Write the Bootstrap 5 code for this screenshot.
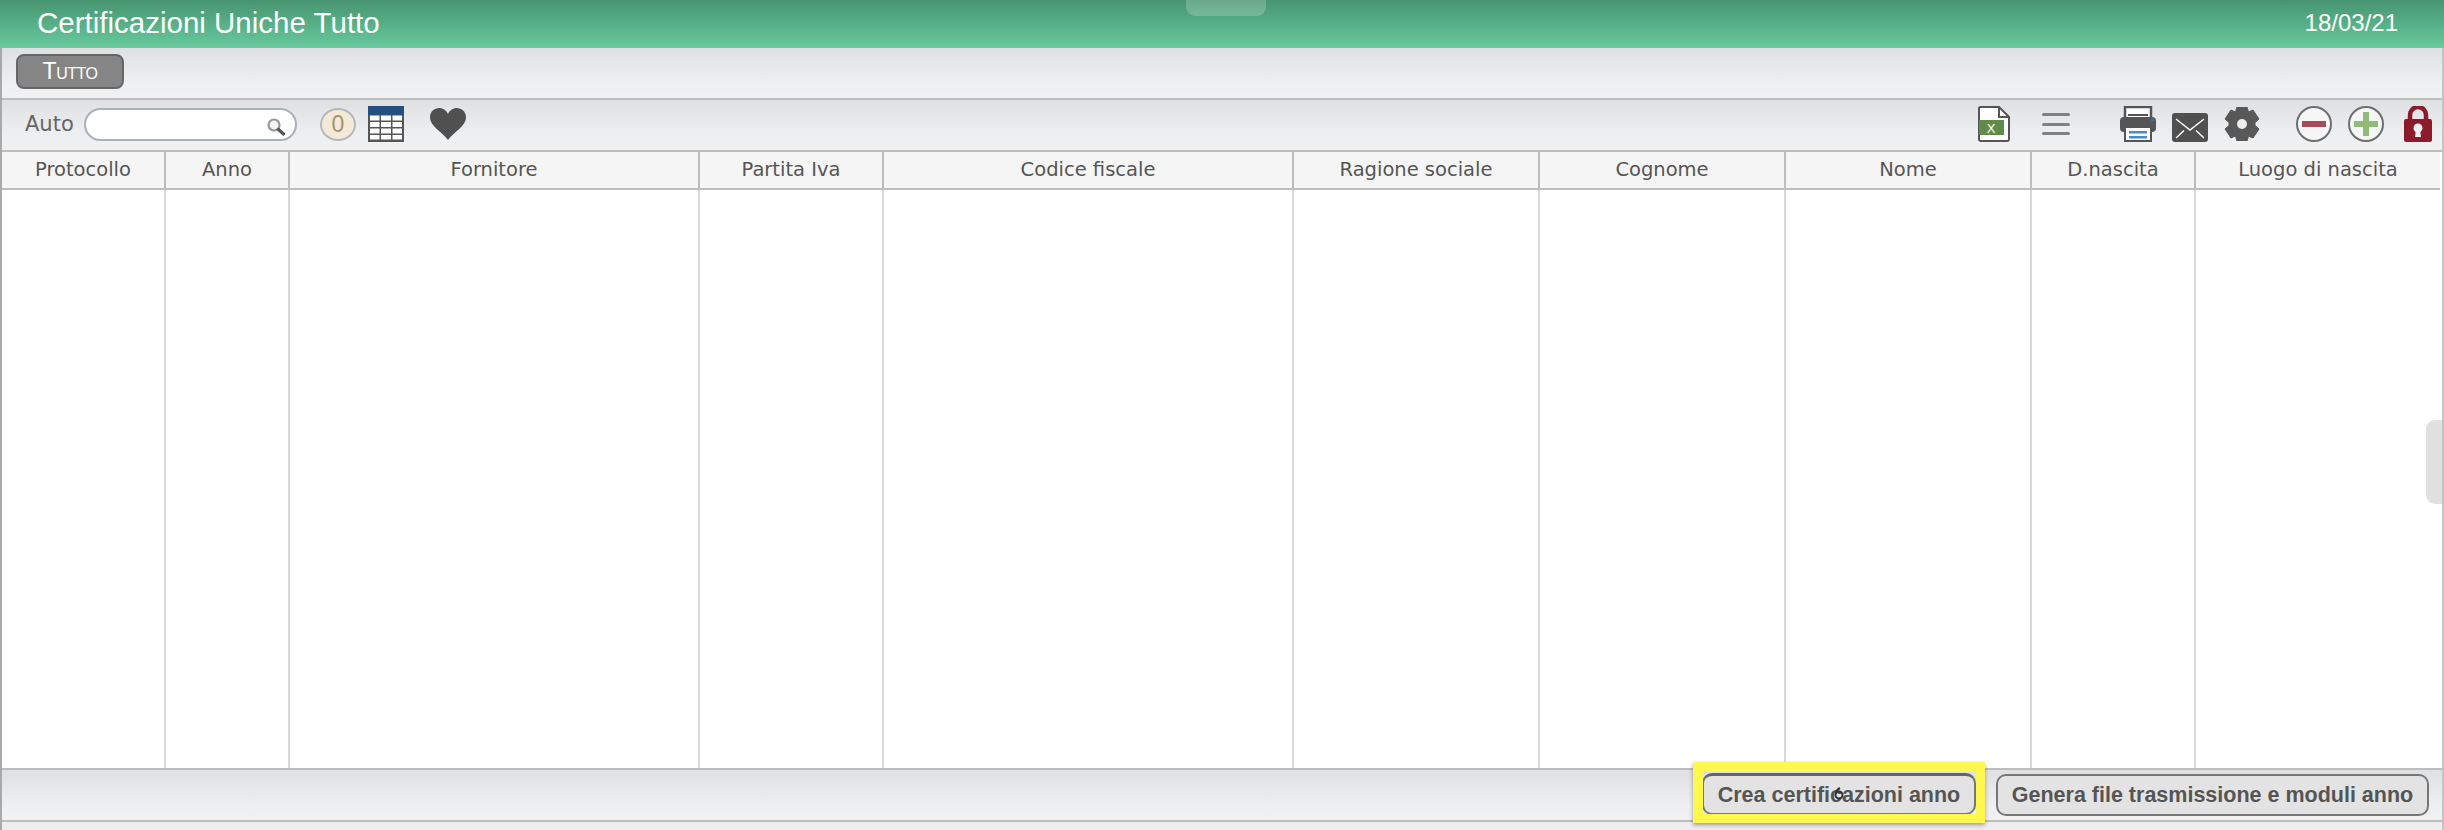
<!DOCTYPE html>
<html lang="it">
<head>
<meta charset="utf-8">
<title>Certificazioni Uniche Tutto</title>
<link href="https://cdn.jsdelivr.net/npm/bootstrap@5.3.0/dist/css/bootstrap.min.css" rel="stylesheet">
<style>
html,body{height:830px;overflow:hidden;background:#fff}
.shell{height:830px;border-left:2px solid #a9a9a9;border-right:2px solid #c4c4c4;font-family:"DejaVu Sans","Liberation Sans",sans-serif;color:#555;position:relative}
.topbar{height:48px;flex:none;background:linear-gradient(#479570,#67ca9d);color:#fff;font-family:"Liberation Sans",Arial,sans-serif;margin-left:-2px;margin-right:-2px;padding-left:37px;padding-right:46px}
.apptitle{font-size:29.500px;line-height:46px}
.appdate{font-size:24px;line-height:46px}
.pulltab{position:absolute;left:1184px;top:0;width:80px;height:16px;background:rgba(255,255,255,.2);border-radius:0 0 9px 9px}
.sidetab{position:absolute;right:0;top:420px;width:16px;height:84px;background:#e0e0e0;border-radius:9px 0 0 9px}
.bargrad{background:linear-gradient(#dfe0e2,#eeeff1 70%,#f0f1f3)}
.tabbar{height:52px;flex:none;border-bottom:2px solid #bdbdbd;padding:6px 14px}
.tabbtn{width:108px;height:35px;line-height:31px;padding:0;background:#858585;border:2px solid #666;border-radius:8px;color:#fff;font-family:"Liberation Sans",sans-serif;font-variant:small-caps;font-size:23px;letter-spacing:-.5px}
.toolbar{height:50px;flex:none;position:relative}
.autolabel{position:absolute;left:23px;top:9px;font-size:21px;line-height:30px;color:#666}
.searchbox{position:absolute;left:82px;top:8px;width:213px;height:33px;background:#fff;border:2px solid #a9b1bd;border-radius:17px}
.searchbox svg{position:absolute;right:9px;top:8px}
.countpill{position:absolute;left:318px;top:8px;width:36px;height:33px;border-radius:50%;background:#f2ead6;border:2px solid #b4b8be;color:#a09672;font-size:23px;line-height:28px;text-align:center;font-family:"Liberation Sans",sans-serif}
.tool{position:absolute;top:6px;display:block}
.gridwrap{flex:1 1 auto;min-height:0;border-top:2px solid #bdbdbd}
.datagrid{table-layout:fixed;width:2438px;height:100%;margin:0;border-collapse:separate;border-spacing:0}
.datagrid th{height:38px;padding:0;background:#f5f5f5;border:0;border-right:2px solid #bdbdbd;border-bottom:2px solid #bdbdbd;font-weight:400;font-size:19.500px;color:#555;text-align:center;vertical-align:middle;box-shadow:none}
.datagrid td{padding:0;background:#fff;border:0;border-right:2px solid #d8d8d8;box-shadow:none}
.datagrid th:last-child,.datagrid td:last-child{border-right:0}
.footbar{height:54px;flex:none;border-top:2px solid #bdbdbd;border-bottom:2px solid #bdbdbd;position:relative}
.footbtn{position:absolute;top:4px;height:42px;padding:0;background:#e3e3e3;border:2px solid #777;border-radius:10px;color:#555;font-family:"Liberation Sans",sans-serif;font-weight:700;font-size:21.500px;line-height:38px;text-align:center}
.btncrea{left:1700px;width:274px;top:3px;border-top:3px solid #666;z-index:2}
.btngenera{left:1994px;width:433px}
.marker{position:absolute;left:1691px;top:-8px;width:292px;height:61px;border:solid #fdf750;border-width:10px 9px 9px 10px;box-shadow:0 2px 4px rgba(0,0,0,.35);z-index:3}
.caret{position:absolute;left:1832px;top:17px;width:10px;height:13px;z-index:4}
.tail{height:8px;flex:none;background:#eee}
</style>
</head>
<body class="m-0">
<div class="shell d-flex flex-column">
  <div class="topbar d-flex justify-content-between">
    <div class="apptitle">Certificazioni Uniche Tutto</div>
    <div class="appdate">18/03/21</div>
  </div>
  <div class="pulltab"></div>
  <div class="tabbar bargrad"><button class="btn tabbtn" type="button">Tutto</button></div>
  <div class="toolbar bargrad">
    <span class="autolabel">Auto</span>
    <div class="searchbox">
      <svg width="19" height="18" viewBox="0 0 19 18"><circle cx="7" cy="7" r="5.500" fill="#f4f4f4" stroke="#999" stroke-width="2.200"/><path d="M11.500 11.500l5 4.500" stroke="#555" stroke-width="3.200" stroke-linecap="round"/></svg>
    </div>
    <div class="countpill">0</div>
    <svg class="tool" style="left:366px" width="36" height="36" viewBox="0 0 36 36"><rect width="36" height="36" fill="#555"/><path d="M0 9V2a2 2 0 0 1 2-2H34a2 2 0 0 1 2 2V9Z" fill="#254f80"/><g fill="#fff"><rect x="2" y="9.500" width="9.500" height="5"/><rect x="13" y="9.500" width="10" height="5"/><rect x="24.500" y="9.500" width="9.500" height="5"/><rect x="2" y="16" width="9.500" height="5"/><rect x="13" y="16" width="10" height="5"/><rect x="24.500" y="16" width="9.500" height="5"/><rect x="2" y="22.500" width="9.500" height="5"/><rect x="13" y="22.500" width="10" height="5"/><rect x="24.500" y="22.500" width="9.500" height="5"/><rect x="2" y="29" width="9.500" height="4.500"/><rect x="13" y="29" width="10" height="4.500"/><rect x="24.500" y="29" width="9.500" height="4.500"/></g></svg>
    <svg class="tool" style="left:428px;top:8px" width="36" height="32" viewBox="0 0 36 32"><path d="M18 32C12 24 0 18 0 9.500 0 3.500 4.500 0 9 0 13 0 16.500 2.500 18 6 19.500 2.500 23 0 27 0 31.500 0 36 3.500 36 9.500 36 18 24 24 18 32Z" fill="#505050"/></svg>

    <svg class="tool" style="left:1976px" width="32" height="36" viewBox="0 0 32 36"><path d="M2 1H21L31 11V33a2 2 0 0 1-2 2H3a2 2 0 0 1-2-2V2Z" fill="#fff" stroke="#555" stroke-width="2"/><path d="M21 1V11H31" fill="none" stroke="#555" stroke-width="2"/><rect x="1" y="14" width="25" height="15" fill="#5f8d49"/><text x="13" y="27" text-anchor="middle" font-family="Liberation Sans" font-size="13" fill="#fff">X</text></svg>
    <svg class="tool" style="left:2040px;top:13px" width="28" height="22" viewBox="0 0 28 22"><g fill="#808080"><rect width="28" height="3" y="0" rx="1.500"/><rect width="28" height="3" y="10" rx="1.500"/><rect width="28" height="3" y="19" rx="1.500"/></g></svg>
    <svg class="tool" style="left:2118px" width="36" height="36" viewBox="0 0 36 36"><path d="M5 12V1H31V12" fill="#fff" stroke="#555" stroke-width="2.500"/><rect x="8" y="8" width="20" height="2" fill="#555"/><rect y="11" width="36" height="15" rx="4" fill="#555"/><rect x="31" y="12" width="3" height="3" fill="#3a6ea8"/><rect x="5" y="21" width="26" height="14" fill="#fff" stroke="#555" stroke-width="2"/><rect x="9" y="25" width="18" height="2.500" fill="#4a8ad0"/><rect x="9" y="30" width="18" height="2.500" fill="#4a8ad0"/></svg>
    <svg class="tool" style="left:2170px;top:13px" width="36" height="29" viewBox="0 0 36 29"><rect width="36" height="29" rx="3" fill="#505050"/><path d="M4 6L18 17 32 6M4 25L12 17.500M32 25L24 17.500" fill="none" stroke="#fff" stroke-width="1.500"/></svg>
    <svg class="tool" style="left:2222px;top:7px" width="36" height="34" viewBox="0 0 36 34"><path d="M13 0H23L24.500 5 29 3 35 12 31 15.500V18.500L35 22 29 31 24.500 29 23 34H13L11.500 29 7 31 1 22 5 18.500V15.500L1 12 7 3 11.500 5Z" fill="#585858" stroke="#585858" stroke-linejoin="round" stroke-width="1"/><circle cx="18" cy="17" r="5" fill="#eceded"/></svg>
    <svg class="tool" style="left:2294px" width="36" height="36" viewBox="0 0 36 36"><circle cx="18" cy="18" r="17" fill="#f6f6f6" stroke="#6e6e6e" stroke-width="2"/><rect x="6" y="15" width="24" height="6" fill="#a84a58"/></svg>
    <svg class="tool" style="left:2346px" width="36" height="36" viewBox="0 0 36 36"><circle cx="18" cy="18" r="17" fill="#f6f6f6" stroke="#6e6e6e" stroke-width="2"/><path d="M6 15H15V6H21V15H30V21H21V30H15V21H6Z" fill="#8fbb76"/></svg>
    <svg class="tool" style="left:2402px" width="28" height="36" viewBox="0 0 28 36"><path d="M6 15V9a8 8 0 0 1 16 0v6" fill="none" stroke="#8c1c2b" stroke-width="4.500"/><rect y="13" width="28" height="23" rx="2" fill="#8c1c2b"/><circle cx="14" cy="22" r="4.500" fill="#f2f2f2"/><path d="M12 24H16L17 31H11Z" fill="#f2f2f2"/></svg>
  </div>
  <div class="gridwrap">
    <table class="table datagrid">
      <colgroup><col style="width:164px"><col style="width:124px"><col style="width:410px"><col style="width:184px"><col style="width:410px"><col style="width:246px"><col style="width:246px"><col style="width:246px"><col style="width:164px"><col style="width:244px"></colgroup>
      <thead><tr><th>Protocollo</th><th>Anno</th><th>Fornitore</th><th>Partita Iva</th><th>Codice fiscale</th><th>Ragione sociale</th><th>Cognome</th><th>Nome</th><th>D.nascita</th><th>Luogo di nascita</th></tr></thead>
      <tbody><tr><td></td><td></td><td></td><td></td><td></td><td></td><td></td><td></td><td></td><td></td></tr></tbody>
    </table>
  </div>
  <div class="sidetab"></div>
  <div class="footbar bargrad">
    <div class="marker"></div>
    <button class="btn footbtn btncrea" type="button">Crea certificazioni anno</button>
    <button class="btn footbtn btngenera" type="button">Genera file trasmissione e moduli anno</button>
    <svg class="caret" viewBox="0 0 10 13"><circle cx="5" cy="8" r="3.500" fill="none" stroke="#333" stroke-width="2"/><path d="M2 7C2 4 4 2 6 1" fill="none" stroke="#333" stroke-width="2"/></svg>
  </div>
  <div class="tail"></div>
</div>
<script src="https://cdn.jsdelivr.net/npm/bootstrap@5.3.0/dist/js/bootstrap.bundle.min.js"></script>
</body>
</html>
